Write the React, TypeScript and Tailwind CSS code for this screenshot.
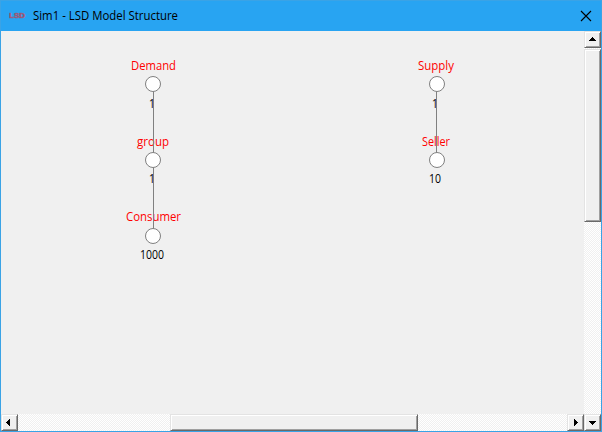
type Dir = "up" | "down" | "left" | "right";

const arrows: Record<Dir, string> = {
  up: "M8 6h1v1h1v1h1v1h1v1H5V9h1V8h1V7h1z",
  down: "M5 7h7v1h-1v1h-1v1H9v1H8v-1H7V9H6V8H5z",
  left: "M9 5v7H8v-1H7v-1H6V9H5V8h1V7h1V6h1V5z",
  right: "M7 5h1v1h1v1h1v1h1v1h-1v1H9v1H8v1H7z",
};

const raised =
  "shrink-0 bg-[#f0f0f0] border border-t-[#e3e3e3] border-l-[#e3e3e3] border-r-[#696969] border-b-[#696969] shadow-[inset_1px_1px_0_#fff,inset_-1px_-1px_0_#a0a0a0]";

const track =
  "bg-[#f0f0f0] bg-[repeating-conic-gradient(#ffffff_0_25%,#f0f0f0_0_50%)] bg-[size:2px_2px]";

function ArrowButton({ dir }: { dir: Dir }) {
  return (
    <button aria-label={`Scroll ${dir}`} className={`${raised} relative h-[17px] w-[17px]`}>
      <svg className="absolute -left-px -top-px" width="17" height="17" shapeRendering="crispEdges">
        <path d={arrows[dir]} />
      </svg>
    </button>
  );
}

type Label = { text: string; x: number; y: number; width: number; color: string };

const red = "#ff0000";
const labels: Label[] = [
  { text: "Demand", x: 131, y: 70, width: 45, color: red },
  { text: "1", x: 149, y: 108, width: 6, color: "#000" },
  { text: "group", x: 137, y: 146, width: 32, color: red },
  { text: "1", x: 149, y: 183, width: 6, color: "#000" },
  { text: "Consumer", x: 126, y: 221, width: 55, color: red },
  { text: "1000", x: 140, y: 259, width: 24, color: "#000" },
  { text: "Supply", x: 418, y: 70, width: 36, color: red },
  { text: "1", x: 432, y: 108, width: 6, color: "#000" },
  { text: "Seller", x: 422, y: 146, width: 28, color: red },
  { text: "10", x: 429, y: 183, width: 12, color: "#000" },
];

const nodes = [
  [153, 84],
  [153, 160],
  [153, 236],
  [437, 84],
  [437, 160],
];

function ModelTree() {
  return (
    <svg className="block h-[383px] w-[583px] shrink-0" viewBox="1 31 583 383">
      {labels.map((l) => (
        <text
          key={`${l.x}-${l.y}`}
          x={l.x}
          y={l.y}
          textLength={l.width}
          lengthAdjust="spacingAndGlyphs"
          fill={l.color}
          className="text-[12px]"
        >
          {l.text}
        </text>
      ))}
      <g stroke="#808080" strokeWidth="1">
        <path d="M153.5 84V236M436.5 84V160" />
        {nodes.map(([x, y]) => (
          <circle key={`${x}-${y}`} cx={x} cy={y} r="7.5" fill="#fff" />
        ))}
      </g>
    </svg>
  );
}

export default function App() {
  return (
    <div className="flex h-[432px] w-[602px] flex-col overflow-hidden border border-[#3aa3e6] bg-[#f0f0f0] font-['Open_Sans','Noto_Sans',sans-serif]">
      <header className="-mx-px -mt-px flex h-[31px] shrink-0 items-center bg-[#28a4f2] pl-[9px] pr-[10px]">
        <svg width="20" height="12" className="mr-[4px]">
          <text
            x="0"
            y="8"
            textLength="16"
            lengthAdjust="spacingAndGlyphs"
            strokeWidth="0.6"
            className="fill-[#d02c3c] stroke-[#8a6a8c] font-['Liberation_Sans',sans-serif] text-[8px] font-bold"
          >
            LSD
          </text>
        </svg>
        <svg width="170" height="24">
          <text x="0" y="16" textLength="145" lengthAdjust="spacingAndGlyphs" className="text-[12px]">
            Sim1 - LSD Model Structure
          </text>
        </svg>
        <button aria-label="Close" className="ml-auto">
          <svg width="12" height="12" className="block" stroke="#000" strokeWidth="1.1">
            <path d="M1 1L11 11M11 1L1 11" />
          </svg>
        </button>
      </header>
      <div className="flex h-[383px] shrink-0">
        <ModelTree />
        <div className={`${track} flex w-[17px] flex-col gap-px`}>
          <ArrowButton dir="up" />
          <div className={`${raised} h-[173px] w-[17px]`} />
        </div>
      </div>
      <div className="flex h-[17px] shrink-0">
        <div className={`${track} flex w-[583px]`}>
          <ArrowButton dir="left" />
          <div className={`${raised} ml-[152px] h-[17px] w-[248px]`} />
          <div className="ml-auto flex">
            <ArrowButton dir="right" />
          </div>
        </div>
        <ArrowButton dir="down" />
      </div>
    </div>
  );
}
